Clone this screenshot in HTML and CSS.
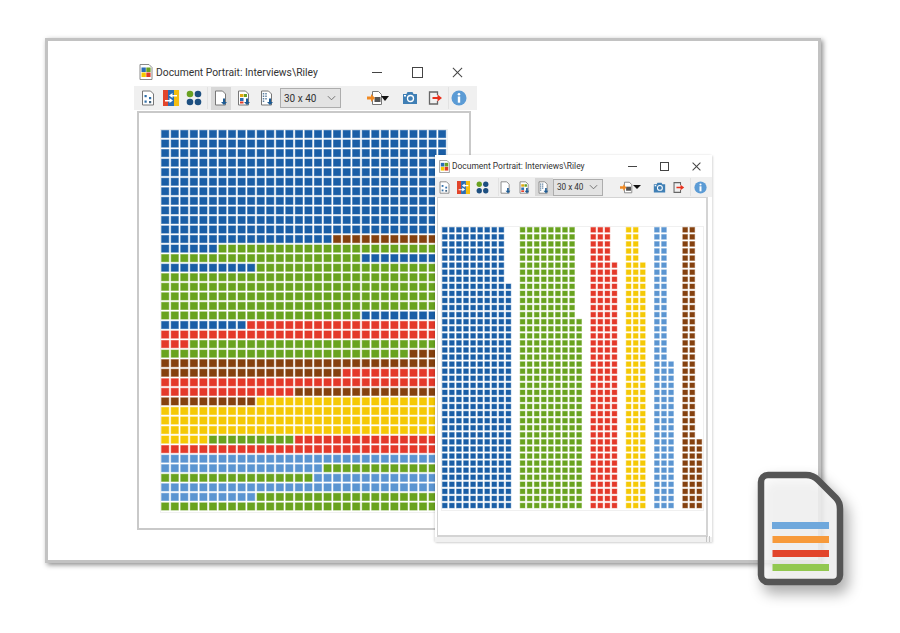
FILE: index.html
```html
<!DOCTYPE html>
<html lang="en">
<head>
<meta charset="utf-8">
<title>Document Portrait</title>
<link rel="stylesheet" href="styles.css">
</head>
<body>
<svg class="defs" width="0" height="0" aria-hidden="true">
  <defs>
    <symbol id="i-app" viewBox="0 0 16 16">
      <path d="M2 .5h9l3 3v12H2z" fill="#fff" stroke="#8a8a8a"/>
      <rect x="3.500" y="3.500" width="4.300" height="4.500" fill="#2a6db5"/><rect x="8.300" y="3.500" width="4.300" height="4.500" fill="#6aa121"/>
      <rect x="3.500" y="8.500" width="4.300" height="4.500" fill="#f5c900"/><rect x="8.300" y="8.500" width="4.300" height="4.500" fill="#e33b26"/>
    </symbol>
    <symbol id="i-page" viewBox="0 0 16 16">
      <path d="M2.500 1h8l3 3v11h-11z" fill="#fff" stroke="#777"/>
      <rect x="4.500" y="5" width="2.200" height="2.200" fill="#2f6ea8"/><rect x="9" y="7" width="2.200" height="2.200" fill="#2f6ea8"/>
      <rect x="4.500" y="10.500" width="2.200" height="2.200" fill="#2f6ea8"/><rect x="9" y="11" width="2.200" height="2.200" fill="#44647f"/>
    </symbol>
    <symbol id="i-swap" viewBox="0 0 16 16">
      <rect x="0" y="0" width="5" height="16" fill="#e2452b"/><rect x="5" y="0" width="6" height="16" fill="#2a6db5"/><rect x="11" y="0" width="5" height="16" fill="#f5bd10"/>
      <path d="M14 5H9.500V3L6 5.500 9.500 8V6.500H14zM2 10h4.500V8l3.500 2.500L6.500 13v-1.500H2z" fill="#fff"/>
    </symbol>
    <symbol id="i-dots" viewBox="0 0 16 16">
      <circle cx="4" cy="4" r="3.300" fill="#6aa121"/><circle cx="12" cy="4" r="3.300" fill="#1d4f80"/>
      <circle cx="4" cy="12" r="3.300" fill="#1d4f80"/><circle cx="12" cy="12" r="3.300" fill="#1d4f80"/>
    </symbol>
    <symbol id="i-docdown" viewBox="0 0 16 16">
      <path d="M2.500 1h7l3 3v11h-10z" fill="#fff" stroke="#777"/>
      <path d="M10 8.500h2v3.500h2l-3 3-3-3h2z" fill="#1d5b94"/>
    </symbol>
    <symbol id="i-colordown" viewBox="0 0 16 16">
      <path d="M2.500 1h7l3 3v11h-10z" fill="#fff" stroke="#777"/>
      <rect x="4" y="4" width="3.500" height="3" fill="#e2a812"/><rect x="8" y="4" width="3" height="3" fill="#6aa121"/>
      <rect x="4" y="8" width="3.500" height="3" fill="#2a6db5"/><rect x="4" y="11.500" width="3.500" height="2" fill="#e33b26"/>
      <path d="M10 8.500h2v3.500h2l-3 3-3-3h2z" fill="#1d5b94"/>
    </symbol>
    <symbol id="i-stripedown" viewBox="0 0 16 16">
      <path d="M2.500 1h7l3 3v11h-10z" fill="#fff" stroke="#777"/>
      <path d="M4.500 3v10M7 3v7" stroke="#5d7f9f" stroke-width="1.500" stroke-dasharray="1.500 1"/>
      <path d="M10 8.500h2v3.500h2l-3 3-3-3h2z" fill="#1d5b94"/>
    </symbol>
    <symbol id="i-import" viewBox="0 0 16 16">
      <path d="M5.500 1.500h6l3 3v10h-9z" fill="#fff" stroke="#777"/>
      <rect x="7.500" y="7" width="6" height="5" fill="#555"/>
      <path d="M0 6.500h4V4l4 4-4 4V9.500H0z" fill="#f08a24"/>
    </symbol>
    <symbol id="i-camera" viewBox="0 0 16 16">
      <path d="M1 4h3.500l1-2h5l1 2H15v10H1z" fill="#3f7fb5"/>
      <circle cx="8.500" cy="8.500" r="3" fill="none" stroke="#fff" stroke-width="1.300"/>
      <rect x="2" y="5" width="2" height="1.500" fill="#fff"/>
    </symbol>
    <symbol id="i-exit" viewBox="0 0 16 16">
      <path d="M10.500 5V2H2.500v12h8v-3" fill="none" stroke="#666" stroke-width="1.300"/>
      <path d="M5.500 7h5V4.500L15 8l-4.500 3.500V9h-5z" fill="#e8301c"/>
    </symbol>
    <symbol id="i-info" viewBox="0 0 16 16">
      <circle cx="8" cy="8" r="7.500" fill="#5b9bd5"/>
      <circle cx="8" cy="4.300" r="1.300" fill="#fff"/><rect x="6.800" y="6.500" width="2.400" height="6.200" fill="#fff"/>
    </symbol>
  </defs>
</svg>

<main class="stage">
  <div class="sheet"></div>

  <section class="win win-large">
    <header class="titlebar">
      <svg class="app-icon"><use href="#i-app"/></svg>
      <span class="title">Document Portrait: Interviews\Riley</span>
      <span class="win-btns">
        <span class="wb wb-min"></span>
        <span class="wb wb-max"></span>
        <span class="wb wb-close"></span>
      </span>
    </header>
    <div class="toolbar">
      <span class="tool"><svg><use href="#i-page"/></svg></span>
      <span class="tool"><svg><use href="#i-swap"/></svg></span>
      <span class="tool"><svg><use href="#i-dots"/></svg></span>
      <span class="sep"></span>
      <span class="tool active"><svg><use href="#i-docdown"/></svg></span>
      <span class="tool"><svg><use href="#i-colordown"/></svg></span>
      <span class="tool"><svg><use href="#i-stripedown"/></svg></span>
      <span class="combo"><span>30 x 40</span><svg class="chev" viewBox="0 0 10 6"><path d="M1 1l4 4 4-4" fill="none" stroke="#666"/></svg></span>
      <span class="spring"></span>
      <span class="tool"><svg><use href="#i-import"/></svg></span>
      <span class="caret"></span>
      <span class="tool cam"><svg><use href="#i-camera"/></svg></span>
      <span class="tool"><svg><use href="#i-exit"/></svg></span>
      <span class="sep sep-end"></span>
      <span class="tool"><svg><use href="#i-info"/></svg></span>
    </div>
    <div class="canvas">
      <svg class="grid" id="grid-large" width="288" height="384" viewBox="0 0 288 384"></svg>
    </div>
  </section>

  <section class="win win-small">
    <header class="titlebar">
      <svg class="app-icon"><use href="#i-app"/></svg>
      <span class="title">Document Portrait: Interviews\Riley</span>
      <span class="win-btns">
        <span class="wb wb-min"></span>
        <span class="wb wb-max"></span>
        <span class="wb wb-close"></span>
      </span>
    </header>
    <div class="toolbar">
      <span class="tool"><svg><use href="#i-page"/></svg></span>
      <span class="tool"><svg><use href="#i-swap"/></svg></span>
      <span class="tool"><svg><use href="#i-dots"/></svg></span>
      <span class="sep"></span>
      <span class="tool"><svg><use href="#i-docdown"/></svg></span>
      <span class="tool"><svg><use href="#i-colordown"/></svg></span>
      <span class="tool active"><svg><use href="#i-stripedown"/></svg></span>
      <span class="combo"><span>30 x 40</span><svg class="chev" viewBox="0 0 10 6"><path d="M1 1l4 4 4-4" fill="none" stroke="#666"/></svg></span>
      <span class="spring"></span>
      <span class="tool"><svg><use href="#i-import"/></svg></span>
      <span class="caret"></span>
      <span class="tool cam"><svg><use href="#i-camera"/></svg></span>
      <span class="tool"><svg><use href="#i-exit"/></svg></span>
      <span class="sep sep-end"></span>
      <span class="tool"><svg><use href="#i-info"/></svg></span>
    </div>
    <div class="canvas">
      <svg class="grid" id="grid-small" width="263" height="285" viewBox="0 0 263 285"></svg>
    </div>
    <div class="statusbar"><span class="grip"></span></div>
  </section>

  <svg class="badge" width="110" height="140" viewBox="0 0 110 140">
    <path class="badge-page" d="M10 16a7 7 0 0 1 7-7h38c5 0 8 1 12 5l18 18c3 3 4 6 4 11v66a7 7 0 0 1-7 7H17a7 7 0 0 1-7-7z"/>
    <rect x="21" y="56" width="57" height="7" fill="#6fa8dc"/>
    <rect x="21.500" y="70" width="56.500" height="7" fill="#f79a3a"/>
    <rect x="21.500" y="84" width="56.500" height="7" fill="#e2452b"/>
    <rect x="21.500" y="98" width="56.500" height="7" fill="#92c850"/>
  </svg>
</main>
<script src="app.js"></script>
</body>
</html>
```

FILE: styles.css
```css
html, body {
  margin: 0;
  padding: 0;
  background: #fff;
}

.defs {
  position: absolute;
}

.stage {
  position: relative;
  width: 900px;
  height: 633px;
  overflow: hidden;
  font-family: Roboto, "Open Sans", sans-serif;
  color: #333;
}

.sheet {
  position: absolute;
  left: 45px;
  top: 38px;
  width: 776px;
  height: 525px;
  box-sizing: border-box;
  background: #fff;
  border: 3px solid #c2c2c2;
  box-shadow: 2px 2px 5px rgba(0, 0, 0, .45);
}

.win {
  position: absolute;
  display: flex;
  flex-direction: column;
  box-sizing: border-box;
  background: #fff;
}

.win-large {
  left: 134px;
  top: 61px;
  width: 343px;
  height: 471px;
}

.win-small {
  left: 435px;
  top: 155px;
  width: 277px;
  height: 387px;
  box-shadow: -1px 0 2px rgba(0, 0, 0, .12), 1px 1px 2px rgba(0, 0, 0, .15);
}

.titlebar {
  display: flex;
  align-items: center;
  flex: none;
  box-sizing: border-box;
}

.win-large .titlebar {
  height: 25px;
  padding: 0 0 3px 4px;
}

.win-small .titlebar {
  height: 22px;
  padding-left: 3px;
}

.app-icon {
  flex: none;
}

.win-large .app-icon {
  width: 16px;
  height: 16px;
  margin-right: 2px;
}

.win-small .app-icon {
  width: 13px;
  height: 13px;
  margin-right: 1px;
}

.title {
  white-space: nowrap;
}

.win-large .title {
  font-size: 10.300px;
}

.win-small .title {
  font-size: 8.450px;
}

.win-btns {
  margin-left: auto;
  display: flex;
  align-items: center;
}

.wb {
  position: relative;
  display: block;
}

.win-large .wb {
  width: 40px;
  height: 20px;
}

.win-small .wb {
  width: 32px;
  height: 18px;
}

.wb-min::before {
  content: "";
  position: absolute;
  left: 50%;
  top: 50%;
  width: 10px;
  height: 1px;
  margin-left: -5px;
  background: #444;
}

.wb-max::before {
  content: "";
  position: absolute;
  left: 50%;
  top: 50%;
  width: 9px;
  height: 9px;
  margin: -5px 0 0 -5px;
  border: 1px solid #444;
}

.wb-close::before,
.wb-close::after {
  content: "";
  position: absolute;
  left: 50%;
  top: 50%;
  width: 13px;
  height: 1px;
  margin-left: -6.500px;
  background: #444;
  transform: rotate(45deg);
}

.wb-close::after {
  transform: rotate(-45deg);
}

.win-small .wb-min::before {
  width: 9px;
  margin-left: -4.500px;
}

.win-small .wb-max::before {
  width: 7px;
  height: 7px;
  margin: -4px 0 0 -4px;
}

.win-small .wb-close::before,
.win-small .wb-close::after {
  width: 11px;
  margin-left: -5.500px;
}

.toolbar {
  display: flex;
  align-items: center;
  flex: none;
  box-sizing: border-box;
  background: #f0f0f0;
}

.win-large .toolbar {
  height: 24px;
  padding: 0 5px 0 4px;
}

.win-small .toolbar {
  height: 20px;
  padding: 0 1.800px 0 0;
}

.tool {
  display: flex;
  align-items: center;
  justify-content: center;
  flex: none;
}

.win-large .tool {
  width: 20px;
  height: 23px;
  margin-right: 3px;
}

.win-large .tool.cam {
  margin-right: 5px;
}

.win-small .tool {
  width: 18px;
  height: 18px;
  margin-right: 1.200px;
}

.tool svg {
  width: 16px;
  height: 16px;
}

.win-small .tool svg {
  width: 13px;
  height: 13px;
}

.tool.active {
  background: #d8d8d8;
}

.sep {
  flex: none;
  width: 1px;
  background: #e2e2e2;
}

.win-large .sep {
  height: 22px;
  margin-right: 3px;
}

.win-small .sep {
  height: 18px;
  margin: 0 -2px 0 5px;
}

.win-large .sep-end {
  margin-right: 0;
}

.win-small .sep-end {
  margin: 0 0 0 1.500px;
}

.combo {
  display: flex;
  align-items: center;
  justify-content: space-between;
  flex: none;
  box-sizing: border-box;
  background: #e3e3e3;
  border: 1px solid #adadad;
  color: #333;
}

.win-large .combo {
  width: 61px;
  height: 20px;
  padding: 0 4px 0 3px;
  font-size: 10px;
}

.win-small .combo {
  width: 50px;
  height: 17px;
  margin-left: -1.200px;
  padding: 0 4px 0 3px;
  font-size: 8.200px;
}

.chev {
  width: 9px;
  height: 6px;
}

.spring {
  flex: 1;
}

.caret {
  flex: none;
  width: 0;
  height: 0;
  border-style: solid;
  border-color: #111 transparent transparent;
}

.win-large .caret {
  margin: 0 11.500px 0 -7.500px;
  border-width: 5px 4.500px 0;
}

.win-small .caret {
  margin: 0 9px 0 -3.200px;
  border-width: 4px 4px 0;
}

.canvas {
  display: flex;
  flex: none;
  box-sizing: border-box;
  background: #fff;
  border: 2px solid #c9c9c9;
}

.win-large .canvas {
  width: 334px;
  height: 419px;
  margin: 1px 0 0 3px;
  padding: 16px 0 0 21px;
}

.win-small .canvas {
  width: 271px;
  height: 340px;
  margin: 0 0 0 2px;
  padding: 28px 0 0 3px;
  border-width: 1px 2px 2px 1px;
  border-color: #d4d4d4;
}

.grid {
  display: block;
  flex: none;
}

.statusbar {
  position: relative;
  flex: 1;
  background: #f0f0f0;
}

.grip {
  position: absolute;
  right: 0;
  bottom: 0;
  width: 6px;
  height: 6px;
  background: repeating-linear-gradient(90deg, #c4c4c4 0 1px, transparent 1px 3px);
}

.badge {
  position: absolute;
  left: 751px;
  top: 466px;
  filter: drop-shadow(5px 8px 7px rgba(0, 0, 0, .36));
}

.badge-page {
  fill: rgba(255, 255, 255, .8);
  stroke: #555;
  stroke-width: 6.500px;
}
```

FILE: app.js
```js
var COLORS = {
  b: '#1a5ea6', g: '#69a31f', r: '#e4392a',
  y: '#f5c905', l: '#5b95d1', n: '#85410f'
};

/* Large waffle: each row is a list of colour runs, 30 cells wide. */
var LARGE = [
  'b30','b30','b30','b30','b30','b30','b30','b30','b30','b30','b30',
  'b18 n12','b6 g24','g21 b9','b10 g20','g30','g30','g30','g30','g21 b9',
  'b9 r21','r30','r3 g27','g26 n4','n30','n19 r11','r30','r14 n16','n10 y20',
  'y30','y30','y30','y5 g9 r16','r30','l30','l17 g13','g16 l14','l30','l10 g20','g30'
];

/* Small waffle: columns of bars; [colour, first col, base width, row the extra col starts]. */
var SMALL = [
  ['b', 0, 9, 8], ['g', 11, 8, 13], ['r', 21, 3, 5],
  ['y', 26, 2, 5], ['l', 30, 2, 19], ['n', 34, 2, 30]
];

function addCell(svg, x, y, size, color, halo) {
  var r = document.createElementNS('http://www.w3.org/2000/svg', 'rect');
  r.setAttribute('x', x.toFixed(2));
  r.setAttribute('y', y.toFixed(2));
  r.setAttribute('width', size);
  r.setAttribute('height', size);
  r.setAttribute('fill', color);
  r.setAttribute('stroke', color);
  r.setAttribute('stroke-opacity', halo);
  svg.appendChild(r);
}

function frame(svg) {
  var r = document.createElementNS('http://www.w3.org/2000/svg', 'rect');
  r.setAttribute('x', 0.5);
  r.setAttribute('y', 0.5);
  r.setAttribute('width', svg.getAttribute('width') - 1);
  r.setAttribute('height', svg.getAttribute('height') - 1);
  r.setAttribute('fill', 'none');
  r.setAttribute('stroke', '#f0f0f0');
  svg.appendChild(r);
}

var large = document.getElementById('grid-large');
frame(large);
LARGE.forEach(function (row, y) {
  var x = 0;
  row.split(' ').forEach(function (run) {
    var n = parseInt(run.slice(1), 10);
    for (var i = 0; i < n; i++, x++) {
      addCell(large, 1.6 + x * 9.55, 1.4 + y * 9.55, 7.2, COLORS[run[0]], 0.55);
    }
  });
});

var small = document.getElementById('grid-small');
frame(small);
for (var y = 0; y < 40; y++) {
  SMALL.forEach(function (bar) {
    var w = bar[2] + (y >= bar[3] ? 1 : 0);
    for (var c = 0; c < w; c++) {
      addCell(small, 1.4 + (bar[1] + c) * 7.07, 1.4 + y * 7.07, 4.8, COLORS[bar[0]], 0.4);
    }
  });
}
```
